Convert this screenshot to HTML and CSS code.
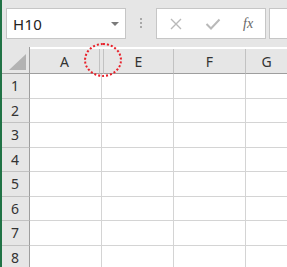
FILE: index.html
```html
<!DOCTYPE html>
<html lang="ja">
<head>
  <meta charset="UTF-8" />
  <title>Sheet</title>
  <link rel="stylesheet" href="styles.css">
</head>
<body>
  <div class="toolbar">
    <div class="namebox">
      <span class="cellref">H10</span>
      <span class="arrow"></span>
    </div>
    <div class="grip"><i></i><i></i><i></i></div>
    <div class="fbox">
      <svg class="ico" width="14" height="14" viewBox="0 0 14 14">
        <path d="M2 2 L12 12 M12 2 L2 12" stroke="#b9b9b9" stroke-width="1.4" fill="none"/>
      </svg>
      <svg class="ico" width="16" height="14" viewBox="0 0 16 14">
        <path d="M1.5 7 L6 11.5 L14.5 2.5" stroke="#b9b9b9" stroke-width="2" fill="none"/>
      </svg>
      <span class="fx">fx</span>
    </div>
    <div class="fbar"></div>
  </div>

  <div class="sheet">
    <div class="corner"><span class="tri"></span></div>
    <div class="colhead">A</div>
    <div class="colhead hidden"></div>
    <div class="colhead">E</div>
    <div class="colhead">F</div>
    <div class="colhead last">G</div>

    <div class="rowhead">1</div><div class="cell a"></div><div class="cell thin"></div><div class="cell"></div><div class="cell"></div><div class="cell last"></div>
    <div class="rowhead">2</div><div class="cell a"></div><div class="cell thin"></div><div class="cell"></div><div class="cell"></div><div class="cell last"></div>
    <div class="rowhead">3</div><div class="cell a"></div><div class="cell thin"></div><div class="cell"></div><div class="cell"></div><div class="cell last"></div>
    <div class="rowhead">4</div><div class="cell a"></div><div class="cell thin"></div><div class="cell"></div><div class="cell"></div><div class="cell last"></div>
    <div class="rowhead">5</div><div class="cell a"></div><div class="cell thin"></div><div class="cell"></div><div class="cell"></div><div class="cell last"></div>
    <div class="rowhead">6</div><div class="cell a"></div><div class="cell thin"></div><div class="cell"></div><div class="cell"></div><div class="cell last"></div>
    <div class="rowhead">7</div><div class="cell a"></div><div class="cell thin"></div><div class="cell"></div><div class="cell"></div><div class="cell last"></div>
    <div class="rowhead">8</div><div class="cell a"></div><div class="cell thin"></div><div class="cell"></div><div class="cell"></div><div class="cell last"></div>

    <div class="mark"></div>
  </div>
</body>
</html>
```

FILE: styles.css
```css
body {
  margin: 0;
  width: 287px;
  height: 267px;
  overflow: hidden;
  background: #e6e6e6;
  border-left: 2px solid #217346;
  box-sizing: border-box;
  font-family: "Noto Sans", "Open Sans", sans-serif;
}

.toolbar {
  display: flex;
  align-items: flex-start;
  height: 47px;
  padding: 8px 0 0 4px;
  box-sizing: border-box;
}

.namebox {
  width: 120px;
  height: 31px;
  background: #fff;
  border: 1px solid #c6c6c6;
  box-sizing: border-box;
  display: flex;
  align-items: center;
  justify-content: space-between;
  padding: 0 6px 0 6px;
}

.cellref {
  font-size: 15px;
  color: #222;
  letter-spacing: 0.3px;
}

.arrow {
  width: 0;
  height: 0;
  border-left: 4px solid transparent;
  border-right: 4px solid transparent;
  border-top: 4px solid #7a7a7a;
}

.grip {
  width: 30px;
  display: flex;
  flex-direction: column;
  align-items: center;
  gap: 2px;
  padding-top: 10px;
}

.grip i {
  width: 2px;
  height: 2px;
  background: #a8a8a8;
}

.fbox {
  width: 110px;
  height: 31px;
  background: #fff;
  border: 1px solid #c6c6c6;
  box-sizing: border-box;
  display: flex;
  align-items: center;
  padding: 0 0 0 12px;
  gap: 22px;
}

.ico {
  display: block;
}

.fx {
  font-family: "Liberation Serif", serif;
  font-style: italic;
  font-size: 14px;
  color: #666;
}

.fbar {
  flex: 1;
  height: 31px;
  margin-left: 3px;
  background: #fff;
  border: 1px solid #c6c6c6;
  border-right: none;
  box-sizing: border-box;
}

.sheet {
  position: relative;
  display: grid;
  grid-template-columns: 28px 70px 4px 70px 72px 1fr;
  grid-template-rows: 27px repeat(8, 24.5px);
  background: #fff;
}

.corner, .colhead, .rowhead {
  background: #e6e6e6;
  color: #333;
  font-size: 14px;
}

.corner {
  border-right: 1px solid #9e9e9e;
  border-bottom: 1px solid #9e9e9e;
  position: relative;
}

.tri {
  position: absolute;
  left: 7px;
  bottom: 3px;
  width: 0;
  height: 0;
  border-left: 17px solid transparent;
  border-bottom: 16px solid #b3b3b3;
}

.colhead {
  display: flex;
  align-items: center;
  justify-content: center;
  border-right: 1px solid #c2c2c2;
  border-bottom: 1px solid #9e9e9e;
  margin-top: 2px;
  padding-top: 1px;
}

.colhead.last, .cell.last {
  border-right: none;
}

.rowhead {
  display: flex;
  align-items: center;
  justify-content: center;
  border-right: 1px solid #9e9e9e;
  border-bottom: 1px solid #c2c2c2;
  padding-right: 1px;
}

.cell {
  border-right: 1px solid #d4d4d4;
  border-bottom: 1px solid #d4d4d4;
}

.cell.a {
  border-right: none;
}

.cell.thin {
  border-right: none;
  background: linear-gradient(to right, transparent 1px, #d4d4d4 1px, #d4d4d4 2px, transparent 2px);
}

.mark {
  position: absolute;
  left: 82px;
  top: -4px;
  width: 34px;
  height: 30px;
  border: 2px dotted #e8202a;
  border-radius: 50%;
}
```
